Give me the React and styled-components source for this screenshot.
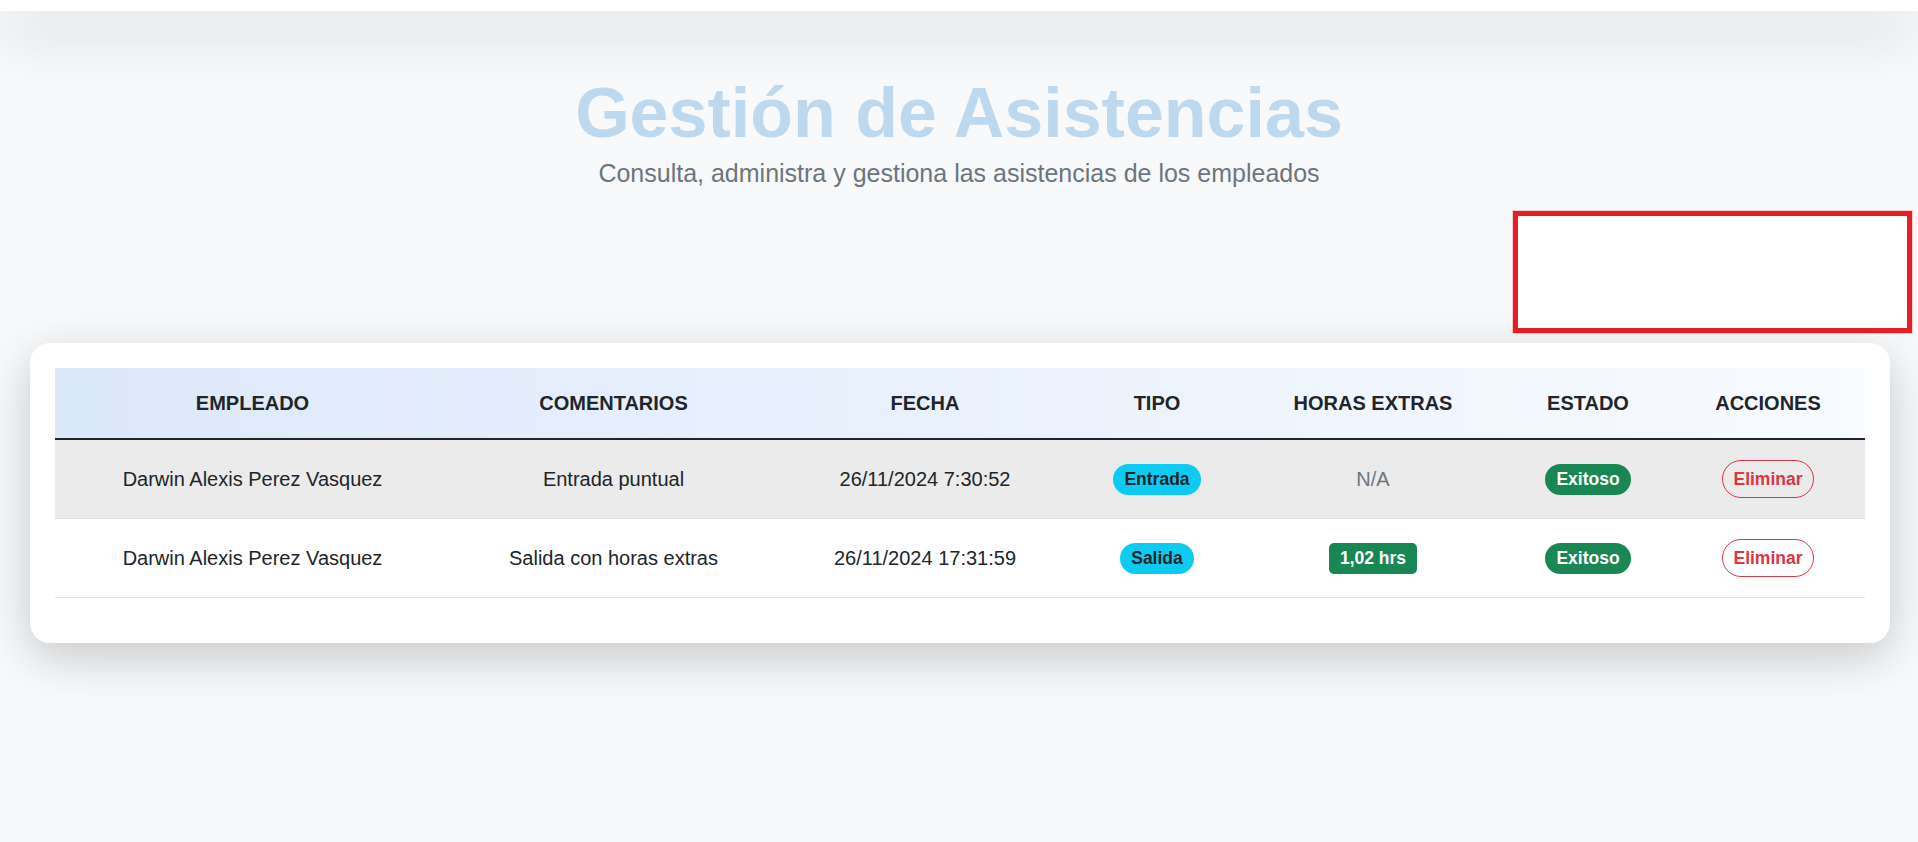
import React from 'react';
import styled, { createGlobalStyle } from 'styled-components';

const GlobalStyle = createGlobalStyle`
    body {
        margin: 0;
        background: #f8f9fa;
        font-family: "Liberation Sans", Arial, sans-serif;
        font-size: 20px;
        color: #212529;
    }
`

const Page = styled.div`
    min-height: 100vh;
    background: #f8f9fa;
    overflow: hidden;
`

const TopBar = styled.div`
    height: 11px;
    background: #fff;
    box-shadow: 0 18px 55px rgba(0, 0, 0, 0.32);
    position: relative;
    z-index: 1;
`

const Header = styled.header`
    text-align: center;
    margin-top: 60px;
`

const Title = styled.h1`
    margin: 0;
    font-size: 70px;
    line-height: 1.2;
    font-weight: 700;
    color: #bdd9ef;
`

const Subtitle = styled.p`
    margin: 0;
    font-size: 25px;
    line-height: 1.5;
    color: #6c757d;
`

const FilterRow = styled.div`
    display: flex;
    justify-content: flex-end;
    padding-right: 6px;
    margin-top: 18px;
`

const FilterBox = styled.div`
    width: 389px;
    height: 112px;
    background: #fff;
    border: 5px solid #e31e24;
    box-shadow: 0 0 0 1px rgba(227, 30, 36, 0.2);
`

const Card = styled.section`
    margin: 10px 28px 0 30px;
    padding: 25px;
    background: #fff;
    border-radius: 20px;
    box-shadow: 0 14px 50px rgba(0, 0, 0, 0.2);
`

const Table = styled.table`
    width: 100%;
    border-collapse: collapse;
    table-layout: fixed;
    margin-bottom: 20px;
`

const HeadRow = styled.tr`
    background: linear-gradient(to right, #dce8fb, #f8fbff);
`

const Th = styled.th`
    box-sizing: border-box;
    width: ${props => props.w}px;
    padding: 20px 10px;
    font-size: 20px;
    line-height: 1.5;
    font-weight: 700;
    text-transform: uppercase;
    text-align: center;
    border-bottom: 2px solid #212529;
`

const Row = styled.tr`
    background: ${props => props.shaded ? "#ebebeb" : "#fff"};
`

const Td = styled.td`
    padding: 20px 10px;
    text-align: center;
    vertical-align: middle;
    line-height: 1.5;
    border-bottom: 1px solid #dee2e6;
    color: ${props => props.muted ? "#6c757d" : "#212529"};
`

const Badge = styled.span`
    display: inline-block;
    padding: 6.5px 11.4px;
    font-size: 17.5px;
    font-weight: 700;
    line-height: 1;
    border-radius: ${props => props.square ? "5px" : "50rem"};
    background: ${props => props.tone === "info" ? "#0dcaf0" : "#198754"};
    color: ${props => props.tone === "info" ? "#212529" : "#fff"};
`

const DeleteButton = styled.button`
    font-family: inherit;
    padding: 5px 10px;
    font-size: 17.5px;
    font-weight: 700;
    line-height: 1.5;
    color: #dc3545;
    background: transparent;
    border: 1px solid #dc3545;
    border-radius: 50rem;
    cursor: pointer;
`

const columns = [
    ["Empleado", 395],
    ["Comentarios", 327],
    ["Fecha", 296],
    ["Tipo", 168],
    ["Horas extras", 264],
    ["Estado", 166],
    ["Acciones", 194],
]

const asistencias = [
    { empleado: "Darwin Alexis Perez Vasquez", comentario: "Entrada puntual", fecha: "26/11/2024 7:30:52", tipo: "Entrada", horas: null },
    { empleado: "Darwin Alexis Perez Vasquez", comentario: "Salida con horas extras", fecha: "26/11/2024 17:31:59", tipo: "Salida", horas: "1,02 hrs" },
]

export default function App() {
    return (
        <Page>
            <GlobalStyle />
            <TopBar />
            <Header>
                <Title>Gestión de Asistencias</Title>
                <Subtitle>Consulta, administra y gestiona las asistencias de los empleados</Subtitle>
            </Header>
            <FilterRow>
                <FilterBox />
            </FilterRow>
            <Card>
                <Table>
                    <thead>
                        <HeadRow>
                            {columns.map(([label, w]) => <Th key={label} w={w}>{label}</Th>)}
                        </HeadRow>
                    </thead>
                    <tbody>
                        {asistencias.map((a, i) => (
                            <Row key={i} shaded={i === 0}>
                                <Td>{a.empleado}</Td>
                                <Td>{a.comentario}</Td>
                                <Td>{a.fecha}</Td>
                                <Td><Badge tone="info">{a.tipo}</Badge></Td>
                                {a.horas
                                    ? <Td><Badge tone="success" square>{a.horas}</Badge></Td>
                                    : <Td muted>N/A</Td>}
                                <Td><Badge tone="success">Exitoso</Badge></Td>
                                <Td><DeleteButton>Eliminar</DeleteButton></Td>
                            </Row>
                        ))}
                    </tbody>
                </Table>
            </Card>
        </Page>
    )
}
